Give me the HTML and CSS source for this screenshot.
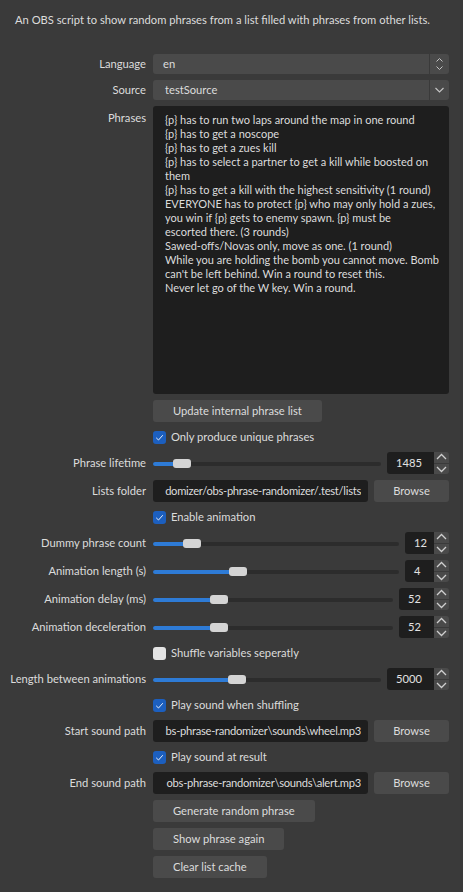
FILE: index.html
```html
<!DOCTYPE html>
<html lang="en">
<head>
<meta charset="utf-8">
<title>OBS Phrase Randomizer</title>
<link rel="stylesheet" href="styles.css">
</head>
<body>
<div class="panel">
  <p class="desc">An OBS script to show random phrases from a list filled with phrases from other lists.</p>
  <div class="form">
    <div class="lbl">Language</div>
    <div class="combo">
      <span class="combo-text">en</span>
      <span class="combo-btn"><svg width="19" height="20" viewBox="0 0 19 20"><path d="M6.5 7.5 L9.5 4.5 L12.5 7.5 M6.5 12.5 L9.5 15.5 L12.5 12.5" fill="none" stroke="#c4c4c4" stroke-width="1"/></svg></span>
    </div>

    <div class="lbl">Source</div>
    <div class="combo">
      <span class="combo-text combo-text-wide">testSource</span>
      <span class="combo-btn"><svg width="19" height="20" viewBox="0 0 19 20"><path d="M5.5 8 L9.5 12 L13.5 8" fill="none" stroke="#c4c4c4" stroke-width="1.2"/></svg></span>
    </div>

    <div class="lbl lbl-top">Phrases</div>
    <div class="phrases">{p} has to run two laps around the map in one round<br>{p} has to get a noscope<br>{p} has to get a zues kill<br>{p} has to select a partner to get a kill while boosted on<br>them<br>{p} has to get a kill with the highest sensitivity (1 round)<br>EVERYONE has to protect {p} who may only hold a zues,<br>you win if {p} gets to enemy spawn. {p} must be<br>escorted there. (3 rounds)<br>Sawed-offs/Novas only, move as one. (1 round)<br>While you are holding the bomb you cannot move. Bomb<br>can't be left behind. Win a round to reset this.<br>Never let go of the W key. Win a round.</div>

    <button class="btn full">Update internal phrase list</button>

    <div class="check full"><span class="box on"><svg width="13" height="13" viewBox="0 0 13 13"><path d="M3.2 6.8 L5.5 9 L9.8 4.2" fill="none" stroke="#e6eefa" stroke-width="1"/></svg></span><span>Only produce unique phrases</span></div>

    <div class="lbl">Phrase lifetime</div>
    <div class="slider-row">
      <div class="slider" style="--p:0.095"><div class="track"></div><div class="fill"></div><div class="thumb"></div></div>
      <div class="spin"><div class="spin-val w47">1485</div><div class="spin-btns"><div class="spin-up"><svg width="15" height="10" viewBox="0 0 15 10"><path d="M3 7 L7.5 2.5 L12 7" fill="none" stroke="#cfcfcf" stroke-width="1.3"/></svg></div><div class="spin-down"><svg width="15" height="10" viewBox="0 0 15 10"><path d="M3 3 L7.5 7.5 L12 3" fill="none" stroke="#cfcfcf" stroke-width="1.3"/></svg></div></div></div>
    </div>

    <div class="lbl">Lists folder</div>
    <div class="path-row">
      <div class="path"><div class="path-inner"><span>domizer/obs-phrase-randomizer/.test/lists</span></div></div>
      <button class="btn browse">Browse</button>
    </div>

    <div class="check full"><span class="box on"><svg width="13" height="13" viewBox="0 0 13 13"><path d="M3.2 6.8 L5.5 9 L9.8 4.2" fill="none" stroke="#e6eefa" stroke-width="1"/></svg></span><span>Enable animation</span></div>

    <div class="lbl">Dummy phrase count</div>
    <div class="slider-row">
      <div class="slider" style="--p:0.13"><div class="track"></div><div class="fill"></div><div class="thumb"></div></div>
      <div class="spin"><div class="spin-val w29">12</div><div class="spin-btns"><div class="spin-up"><svg width="15" height="10" viewBox="0 0 15 10"><path d="M3 7 L7.5 2.5 L12 7" fill="none" stroke="#cfcfcf" stroke-width="1.3"/></svg></div><div class="spin-down"><svg width="15" height="10" viewBox="0 0 15 10"><path d="M3 3 L7.5 7.5 L12 3" fill="none" stroke="#cfcfcf" stroke-width="1.3"/></svg></div></div></div>
    </div>

    <div class="lbl">Animation length (s)</div>
    <div class="slider-row">
      <div class="slider" style="--p:0.333"><div class="track"></div><div class="fill"></div><div class="thumb"></div></div>
      <div class="spin"><div class="spin-val w29">4</div><div class="spin-btns"><div class="spin-up"><svg width="15" height="10" viewBox="0 0 15 10"><path d="M3 7 L7.5 2.5 L12 7" fill="none" stroke="#cfcfcf" stroke-width="1.3"/></svg></div><div class="spin-down"><svg width="15" height="10" viewBox="0 0 15 10"><path d="M3 3 L7.5 7.5 L12 3" fill="none" stroke="#cfcfcf" stroke-width="1.3"/></svg></div></div></div>
    </div>

    <div class="lbl">Animation delay (ms)</div>
    <div class="slider-row">
      <div class="slider" style="--p:0.257"><div class="track"></div><div class="fill"></div><div class="thumb"></div></div>
      <div class="spin"><div class="spin-val w35">52</div><div class="spin-btns"><div class="spin-up"><svg width="15" height="10" viewBox="0 0 15 10"><path d="M3 7 L7.5 2.5 L12 7" fill="none" stroke="#cfcfcf" stroke-width="1.3"/></svg></div><div class="spin-down"><svg width="15" height="10" viewBox="0 0 15 10"><path d="M3 3 L7.5 7.5 L12 3" fill="none" stroke="#cfcfcf" stroke-width="1.3"/></svg></div></div></div>
    </div>

    <div class="lbl">Animation deceleration</div>
    <div class="slider-row">
      <div class="slider" style="--p:0.257"><div class="track"></div><div class="fill"></div><div class="thumb"></div></div>
      <div class="spin"><div class="spin-val w35">52</div><div class="spin-btns"><div class="spin-up"><svg width="15" height="10" viewBox="0 0 15 10"><path d="M3 7 L7.5 2.5 L12 7" fill="none" stroke="#cfcfcf" stroke-width="1.3"/></svg></div><div class="spin-down"><svg width="15" height="10" viewBox="0 0 15 10"><path d="M3 3 L7.5 7.5 L12 3" fill="none" stroke="#cfcfcf" stroke-width="1.3"/></svg></div></div></div>
    </div>

    <div class="check full"><span class="box off"></span><span>Shuffle variables seperatly</span></div>

    <div class="lbl">Length between animations</div>
    <div class="slider-row">
      <div class="slider" style="--p:0.357"><div class="track"></div><div class="fill"></div><div class="thumb"></div></div>
      <div class="spin"><div class="spin-val w47">5000</div><div class="spin-btns"><div class="spin-up"><svg width="15" height="10" viewBox="0 0 15 10"><path d="M3 7 L7.5 2.5 L12 7" fill="none" stroke="#cfcfcf" stroke-width="1.3"/></svg></div><div class="spin-down"><svg width="15" height="10" viewBox="0 0 15 10"><path d="M3 3 L7.5 7.5 L12 3" fill="none" stroke="#cfcfcf" stroke-width="1.3"/></svg></div></div></div>
    </div>

    <div class="check full"><span class="box on"><svg width="13" height="13" viewBox="0 0 13 13"><path d="M3.2 6.8 L5.5 9 L9.8 4.2" fill="none" stroke="#e6eefa" stroke-width="1"/></svg></span><span>Play sound when shuffling</span></div>

    <div class="lbl">Start sound path</div>
    <div class="path-row">
      <div class="path"><div class="path-inner"><span>bs-phrase-randomizer\sounds\wheel.mp3</span></div></div>
      <button class="btn browse">Browse</button>
    </div>

    <div class="check full"><span class="box on"><svg width="13" height="13" viewBox="0 0 13 13"><path d="M3.2 6.8 L5.5 9 L9.8 4.2" fill="none" stroke="#e6eefa" stroke-width="1"/></svg></span><span>Play sound at result</span></div>

    <div class="lbl">End sound path</div>
    <div class="path-row">
      <div class="path"><div class="path-inner"><span>obs-phrase-randomizer\sounds\alert.mp3</span></div></div>
      <button class="btn browse">Browse</button>
    </div>

    <button class="btn full">Generate random phrase</button>
    <button class="btn full">Show phrase again</button>
    <button class="btn full">Clear list cache</button>
  </div>
</div>
</body>
</html>
```
FILE: styles.css
```css
html, body {
  margin: 0;
  padding: 0;
}
body {
  width: 463px;
  height: 892px;
  overflow: hidden;
  background: #3a3a3a;
  color: #dcdcdc;
  font-family: "Lato", "Open Sans", sans-serif;
  font-size: 11.2px;
}
.panel {
  padding: 12px 14px 0 0;
}
.desc {
  margin: 0 0 26px 15px;
  line-height: 16px;
  white-space: nowrap;
}
.form {
  display: grid;
  grid-template-columns: 146px minmax(0, 1fr);
  column-gap: 7px;
  row-gap: 6px;
}
.lbl {
  grid-column: 1;
  text-align: right;
  align-self: center;
  white-space: nowrap;
  line-height: 16px;
}
.lbl-top {
  align-self: start;
  margin-top: 4px;
}
.full {
  grid-column: 2;
}
.combo {
  height: 20px;
  display: flex;
  background: #4a4a4a;
  border-radius: 3px;
}
.combo-text {
  flex: 1;
  padding-left: 10px;
  line-height: 20px;
}
.combo-text-wide {
  padding-left: 12px;
}
.combo-btn {
  width: 19px;
  border-left: 1px solid #3a3a3a;
  display: flex;
}
.phrases {
  height: 288px;
  box-sizing: border-box;
  background: #1e1e1e;
  border-radius: 3px;
  padding: 7px 12px;
  line-height: 14px;
  font-size: 11px;
  white-space: nowrap;
  overflow: hidden;
}
.btn {
  font: inherit;
  color: inherit;
  border: 0;
  margin: 0;
  justify-self: start;
  height: 22px;
  padding: 0 20px;
  background: #4a4a4a;
  border-radius: 3px;
  line-height: 22px;
  text-align: center;
}
.check {
  display: flex;
  align-items: center;
  gap: 5px;
  height: 18px;
  line-height: 16px;
}
.box {
  width: 13px;
  height: 13px;
  border-radius: 3px;
  display: block;
  flex: none;
}
.box svg {
  display: block;
}
.box.on {
  background: #1c5fbf;
}
.box.off {
  background: #e4e4e4;
}
.slider-row {
  display: flex;
  align-items: center;
  gap: 6px;
  height: 22px;
  min-width: 0;
}
.slider {
  flex: 1;
  min-width: 0;
  position: relative;
  height: 9px;
}
.track {
  position: absolute;
  left: 0;
  right: 0;
  top: 3px;
  height: 4px;
  background: #2c2c2c;
  border-radius: 2px;
}
.fill {
  position: absolute;
  left: 0;
  top: 3px;
  height: 4px;
  width: calc(var(--p) * (100% - 18px) + 9px);
  background: #2e7bd6;
  border-radius: 2px;
}
.thumb {
  position: absolute;
  top: 0;
  left: calc(var(--p) * (100% - 18px));
  width: 18px;
  height: 9px;
  background: #d4d4d4;
  border-radius: 3px;
}
.spin {
  display: flex;
  flex: none;
  height: 22px;
}
.spin-val {
  box-sizing: border-box;
  background: #1e1e1e;
  border-radius: 3px 0 0 3px;
  padding-left: 9px;
  line-height: 22px;
  color: #e2e2e2;
}
.w47 { width: 47px; }
.w35 { width: 35px; }
.w29 { width: 29px; }
.spin-btns {
  width: 15px;
  display: flex;
  flex-direction: column;
  gap: 1px;
}
.spin-up, .spin-down {
  flex: 1;
  background: #4a4a4a;
  display: flex;
  align-items: center;
  justify-content: center;
}
.spin-up { border-top-right-radius: 3px; }
.spin-down { border-bottom-right-radius: 3px; }
.spin-up svg, .spin-down svg { display: block; }
.path-row {
  display: flex;
  gap: 6px;
  height: 22px;
  min-width: 0;
}
.path {
  flex: 1;
  min-width: 0;
  display: flex;
  background: #1e1e1e;
  border-radius: 3px;
  padding: 0 7px;
  line-height: 22px;
  letter-spacing: -0.28px;
}
.path-inner {
  flex: 1;
  min-width: 0;
  overflow: hidden;
  display: flex;
  justify-content: flex-end;
  white-space: nowrap;
}
.path-inner span {
  flex: none;
}
.browse {
  width: 75px;
  padding: 0;
  flex: none;
}
```
